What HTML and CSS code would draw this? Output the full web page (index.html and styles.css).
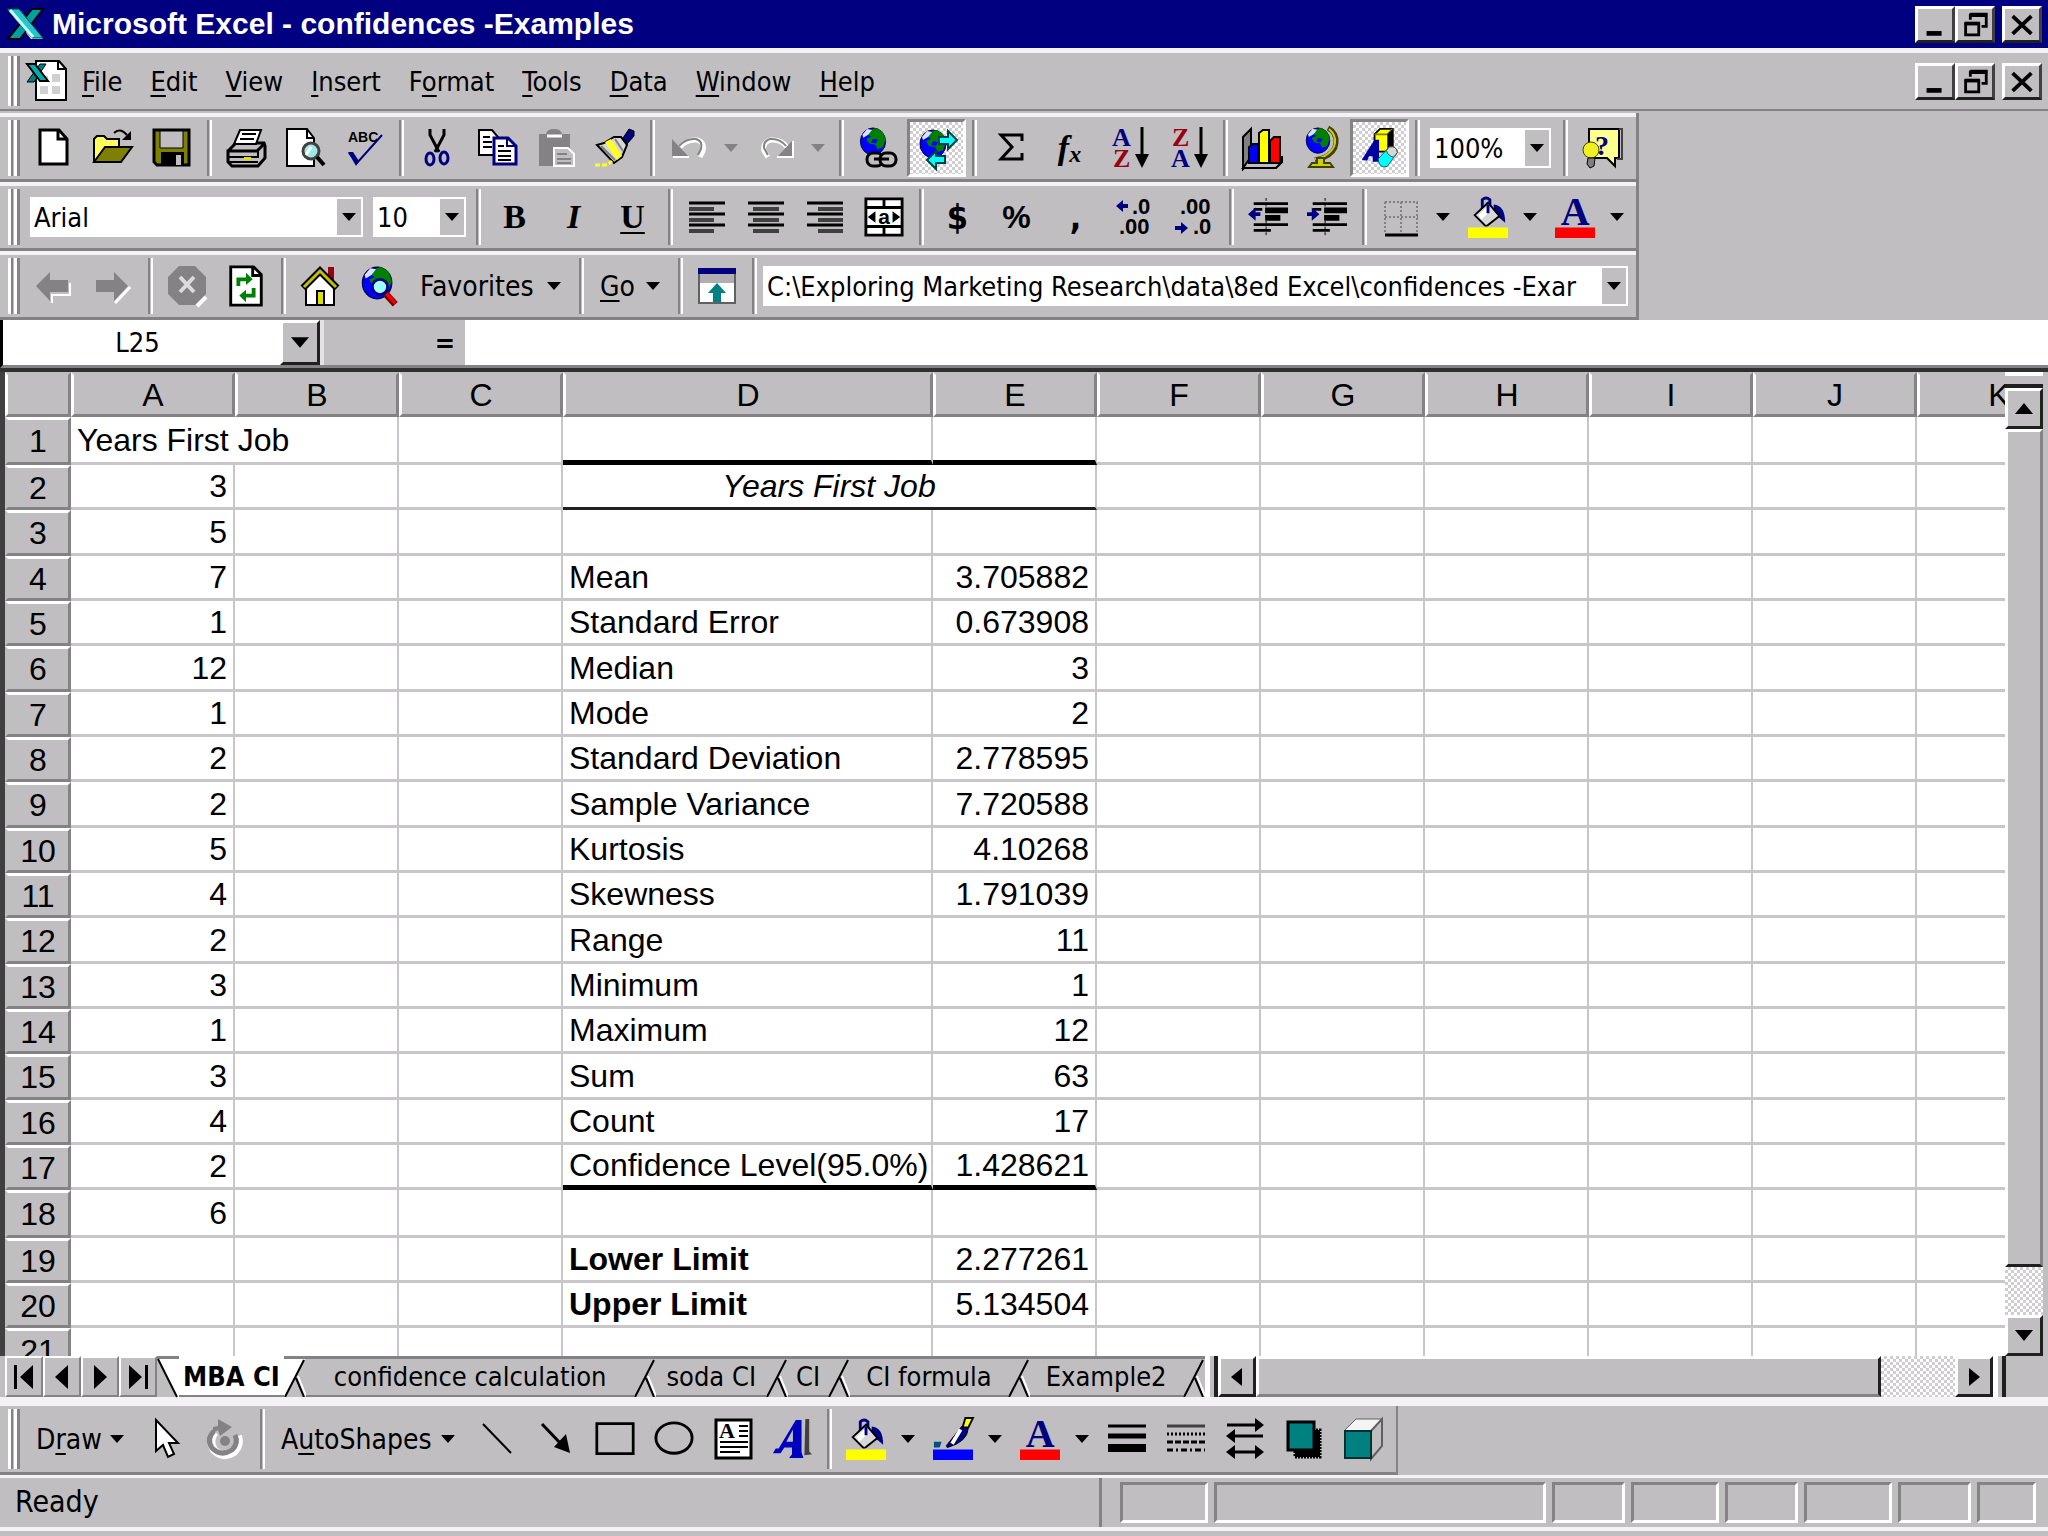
FILE: index.html
```html
<!DOCTYPE html>
<html lang="en">
<head>
  <meta charset="utf-8">
  <title>Microsoft Excel - confidences -Examples</title>
  <link rel="stylesheet" href="styles.css">
</head>
<body>

  <!-- shared icons -->
  <svg class="defs" aria-hidden="true">
    <symbol id="down" viewBox="0 0 14 8"><path d="M0 0h14L7 8z"/></symbol>
    <symbol id="min" viewBox="0 0 32 28"><path d="M7 21h16v5H7z"/></symbol>
    <symbol id="restore" viewBox="0 0 32 28">
      <path d="M11 3h17v13h-5M11 9V3" fill="none" stroke="#000" stroke-width="3"/><path d="M10 2h19v4H10z"/>
      <path d="M6 13h14v12H6z" fill="#c0bec0" stroke="#000" stroke-width="3"/><path d="M5 11h16v4H5z"/>
    </symbol>
    <symbol id="close" viewBox="0 0 32 28"><path d="M6 5l20 19M26 5L6 24" stroke="#000" stroke-width="4"/></symbol>
    <symbol id="globe" viewBox="0 0 28 32">
      <ellipse cx="14" cy="15" rx="13" ry="14" fill="#0000ff" stroke="#003" stroke-width="1"/>
      <path d="M9 4l8-3 7 4 3 8-3 8-5 2-3-5-6-1-3-5 5-2-4-3z" fill="#008000"/>
      <path d="M3 8l5-6 5 1-4 5-5 3z" fill="#d8e4ff"/>
      <path d="M14 12l5 1-2 4-5-1z" fill="#0000ff"/>
    </symbol>
    <symbol id="bucket" viewBox="0 0 40 30">
      <path d="M14 13V3q4-4 8 0v9" fill="none" stroke="#000080" stroke-width="3"/>
      <path d="M26 8q12 1 12 19l-7-6-5-9z" fill="#000080"/>
      <path d="M6 19L20 6l12 14-14 11z" fill="#d8d8d8" stroke="#000" stroke-width="2"/>
      <path d="M10 19l8-8 3 5-8 8z" fill="#fff"/>
      <path d="M20 8v9" stroke="#000080" stroke-width="3"/>
    </symbol>
    <symbol id="indent" viewBox="0 0 40 40">
      <path d="M5 6h36M5 28h36" stroke="#000" stroke-width="3"/>
      <path d="M17 10h24v6H17zM17 18h16v6H17z"/>
      <path d="M5 34h18M5 12h9" stroke="#000" stroke-width="3"/>
      <path d="M18 0v40" stroke="#000" stroke-width="1" stroke-dasharray="3 3"/>
    </symbol>
    <symbol id="slash" viewBox="0 0 22 38">
      <path d="M1 38L20 1M12 19l8 19" fill="none" stroke="#000" stroke-width="2"/>
      <path d="M14 17l8 20" stroke="#fff" stroke-width="2"/>
    </symbol>
  </svg>

  <header class="title-bar">
    <svg class="logo" viewBox="0 0 38 34">
      <path d="M3 4h12l22 28H25z" fill="#fff"/>
      <path d="M26 2h11L14 32H2z" fill="#00a0a0" stroke="#000" stroke-width="2"/>
      <path d="M1 2h12l24 29h-11z" fill="#20c8c8" stroke="#004040" stroke-width="1"/>
      <path d="M4 3l23 27" stroke="#c8ffff" stroke-width="3"/>
    </svg>
    <h1>Microsoft Excel - confidences -Examples</h1>
    <div class="window-buttons">
      <button aria-label="Minimize"><svg><use href="#min"/></svg></button>
      <button aria-label="Restore"><svg><use href="#restore"/></svg></button>
      <button aria-label="Close"><svg><use href="#close"/></svg></button>
    </div>
  </header>

  <nav class="menu-bar">
    <span class="grip"></span>
    <svg class="doc-icon" viewBox="0 0 42 42">
      <path d="M10 1h23l7 8v31H10z" fill="#fff" stroke="#000" stroke-width="2"/>
      <path d="M32 1v8h8" fill="none" stroke="#000" stroke-width="2"/>
      <path d="M14 16h8v6h-8zM26 14h8v8h-8zM14 26h8v8h-8zM26 26h8v8h-8z" fill="#d0d0d0"/>
      <path d="M14 4h6L8 22H1z" fill="#008080" stroke="#000"/>
      <path d="M1 4h8l13 17h-8z" fill="#00b0b0" stroke="#000" stroke-width="2"/>
    </svg>
    <button><u>F</u>ile</button>
    <button><u>E</u>dit</button>
    <button><u>V</u>iew</button>
    <button><u>I</u>nsert</button>
    <button>F<u>o</u>rmat</button>
    <button><u>T</u>ools</button>
    <button><u>D</u>ata</button>
    <button><u>W</u>indow</button>
    <button><u>H</u>elp</button>
    <div class="window-buttons">
      <button aria-label="Minimize workbook"><svg><use href="#min"/></svg></button>
      <button aria-label="Restore workbook"><svg><use href="#restore"/></svg></button>
      <button aria-label="Close workbook"><svg><use href="#close"/></svg></button>
    </div>
  </nav>

  <div class="toolbars">
    <!-- standard -->
    <div class="toolbar">
      <span class="grip"></span>
      <button class="tool" aria-label="New"><svg viewBox="0 0 40 40"><path d="M6 2h19l8 9v25H6z" fill="#fff" stroke="#000" stroke-width="3"/><path d="M24 2v9h9" fill="none" stroke="#000" stroke-width="3"/></svg></button>
      <button class="tool" aria-label="Open"><svg viewBox="0 0 40 40">
        <path d="M1 34V11l3-3h7l3 3h12v8" fill="#ffff60" stroke="#000" stroke-width="2"/>
        <path d="M1 34l11-15h27L28 34z" fill="#808000" stroke="#000" stroke-width="2"/>
        <path d="M21 5q6-6 13 2" fill="none" stroke="#000" stroke-width="2"/><path d="M38 3v9h-9z"/></svg></button>
      <button class="tool" aria-label="Save"><svg viewBox="0 0 40 40">
        <path d="M2 2h35v35H5l-3-3z" fill="#808000" stroke="#000" stroke-width="3"/>
        <path d="M8 3h23v17H8z" fill="#c0bec0" stroke="#000" stroke-width="1"/><path d="M9 24h23v13H9z"/><path d="M24 27h5v10h-5z" fill="#c0bec0"/></svg></button>
      <span class="sep"></span>
      <button class="tool" aria-label="Print"><svg viewBox="0 0 40 40">
        <path d="M14 2h21l-5 14H8z" fill="#fff" stroke="#000" stroke-width="2"/><path d="M16 6h14M14 11h14" stroke="#000" stroke-width="2"/>
        <path d="M2 23l8-8M30 15h8l1 3v12l-7 8H6l-4-4V23h29l7-7" fill="#c0bec0" stroke="#000" stroke-width="3"/>
        <path d="M3 29h29v-6M3 34h29" fill="none" stroke="#000" stroke-width="2"/><path d="M18 29h7v3h-7z" fill="#e0e000"/></svg></button>
      <button class="tool" aria-label="Print Preview"><svg viewBox="0 0 40 40">
        <path d="M2 1h20l7 9v28H2z" fill="#fff" stroke="#000" stroke-width="2"/><path d="M22 1v9h7" fill="none" stroke="#000" stroke-width="2"/>
        <circle cx="26" cy="23" r="8" fill="#a0e8e8" stroke="#404040" stroke-width="3"/><path d="M21 27l5-8" stroke="#fff" stroke-width="3"/><path d="M32 29l7 8" stroke="#000" stroke-width="4"/></svg></button>
      <button class="tool" aria-label="Spelling"><svg viewBox="0 0 40 40">
        <text x="4" y="14" class="svg-abc">ABC</text><path d="M5 25l8 10L38 7" fill="none" stroke="#000080" stroke-width="2"/><path d="M4 24h5l6 9-3 5z" fill="#000080"/></svg></button>
      <span class="sep"></span>
      <button class="tool" aria-label="Cut"><svg viewBox="0 0 40 40">
        <path d="M12 1v6l9 17M26 1v6l-9 17" fill="none" stroke="#000" stroke-width="3"/>
        <ellipse cx="12" cy="31" rx="4" ry="6" fill="none" stroke="#000080" stroke-width="3"/><ellipse cx="26" cy="30" rx="4" ry="6" fill="none" stroke="#000080" stroke-width="3"/></svg></button>
      <button class="tool" aria-label="Copy"><svg viewBox="0 0 40 40">
        <path d="M2 2h13l6 7v18H2z" fill="#fff" stroke="#000" stroke-width="2"/><path d="M6 9h7M6 14h9M6 19h9" stroke="#000" stroke-width="2"/>
        <path d="M17 10h14l8 8v18H17z" fill="#fff" stroke="#000080" stroke-width="3"/><path d="M30 10v8h8" fill="none" stroke="#000080" stroke-width="2"/><path d="M21 18h6M21 23h13M21 28h13M21 32h13" stroke="#000" stroke-width="2"/></svg></button>
      <button class="tool" aria-label="Paste"><svg viewBox="0 0 40 40">
        <path d="M3 6h7q1-5 8-5t8 5h8v32H3z" fill="#848284"/><path d="M11 8h15" stroke="#fff" stroke-width="3"/>
        <path d="M18 20h14l6 6v12H18z" fill="#c0bec0" stroke="#fff" stroke-width="2"/><path d="M21 26h10M21 31h14M21 35h14" stroke="#848284" stroke-width="2"/></svg></button>
      <button class="tool" aria-label="Format Painter"><svg viewBox="0 0 40 40">
        <path d="M28 10l6-9 5 2v5l-7 8z" fill="#000080" stroke="#000"/>
        <path d="M2 17l7-2 10-6h7l6 8-5 12-8 6z" fill="#d8d8d8" stroke="#000" stroke-width="2"/>
        <path d="M16 11l11 17-5 4-12-18z" fill="#ffff20"/><path d="M6 18l14 14M20 11l8 12" stroke="#808080" stroke-width="2"/>
        <path d="M0 37h9q4 0 8-4" fill="none" stroke="#ffff20" stroke-width="3" stroke-dasharray="5 2"/></svg></button>
      <span class="sep"></span>
      <button class="tool" aria-label="Undo" disabled><svg viewBox="0 0 40 40">
        <path d="M11 19q7-8 17-7 8 2 6 11l-3 6" fill="none" stroke="#fff" stroke-width="5"/>
        <path d="M10 18q7-8 17-7 7 2 5 10l-3 6" fill="none" stroke="#848284" stroke-width="2"/><path d="M3 11v17h16z" fill="#848284"/><path d="M4 29h16" stroke="#fff" stroke-width="2"/></svg></button>
      <button class="drop dim" aria-label="Undo list" disabled><svg><use href="#down"/></svg></button>
      <button class="tool" aria-label="Redo" disabled><svg viewBox="0 0 40 40">
        <path d="M31 19q-6-8-16-7-9 2-7 11l4 6" fill="none" stroke="#fff" stroke-width="5"/>
        <path d="M30 18q-6-8-16-7-7 2-6 9l4 7" fill="none" stroke="#848284" stroke-width="2"/><path d="M36 13v15H22z" fill="#848284"/><path d="M21 29h16V13" fill="none" stroke="#fff" stroke-width="2"/></svg></button>
      <button class="drop dim" aria-label="Redo list" disabled><svg><use href="#down"/></svg></button>
      <span class="sep"></span>
      <button class="tool" aria-label="Insert Hyperlink"><svg viewBox="0 0 40 42">
        <use href="#globe" x="1" y="0" width="28" height="31"/>
        <rect x="9" y="26" width="16" height="13" rx="6" fill="#c0bec0" stroke="#000" stroke-width="3"/><rect x="22" y="26" width="16" height="13" rx="6" fill="#c0bec0" stroke="#000" stroke-width="3"/><path d="M16 32h15" stroke="#000" stroke-width="3"/></svg></button>
      <button class="tool pressed" aria-label="Web Toolbar"><svg viewBox="0 0 40 42">
        <use href="#globe" x="1" y="2" width="30" height="32"/>
        <path d="M22 10h9V4l9 9-9 9v-5h-9z" fill="#00ffff" stroke="#004040" stroke-width="2"/><path d="M28 29h-9v-5l-9 9 9 9v-6h9z" fill="#00ffff" stroke="#004040" stroke-width="2"/></svg></button>
      <span class="sep"></span>
      <button class="tool" aria-label="AutoSum"><svg viewBox="0 0 40 40"><path d="M31 13V7H10l11 12L10 31h21v-6" fill="none" stroke="#000" stroke-width="3"/></svg></button>
      <button class="tool fx" aria-label="Paste Function"><i>f</i><i><sub>x</sub></i></button>
      <button class="tool" aria-label="Sort Ascending"><svg viewBox="0 0 40 42">
        <text x="3" y="19" class="svg-az" fill="#000080">A</text><text x="4" y="40" class="svg-az" fill="#990010">Z</text><path d="M33 0v32" stroke="#000" stroke-width="3"/><path d="M26 27h14l-7 14z"/></svg></button>
      <button class="tool" aria-label="Sort Descending"><svg viewBox="0 0 40 42">
        <text x="4" y="19" class="svg-az" fill="#990010">Z</text><text x="3" y="40" class="svg-az" fill="#000080">A</text><path d="M33 0v32" stroke="#000" stroke-width="3"/><path d="M26 27h14l-7 14z"/></svg></button>
      <span class="sep"></span>
      <button class="tool" aria-label="Chart Wizard"><svg viewBox="0 0 40 42">
        <path d="M1 10l8-8v32l-8 8z" fill="#808080" stroke="#000" stroke-width="2"/><path d="M1 41h33l6-6v-5H9z" fill="#c0bec0" stroke="#000" stroke-width="2"/>
        <path d="M7 20l4-3h5v19H7z" fill="#0000ff" stroke="#000" stroke-width="2"/><path d="M17 6l4-3h6v33H17z" fill="#ffff00" stroke="#000" stroke-width="2"/><path d="M28 14l4-4h6v26H28z" fill="#ff0000" stroke="#000" stroke-width="2"/></svg></button>
      <button class="tool" aria-label="Map"><svg viewBox="0 0 40 42">
        <path d="M27 1q9 5 8 15t-13 15l-8 2" fill="none" stroke="#404000" stroke-width="5"/><path d="M28 2q7 6 6 14t-12 14l-8 2" fill="none" stroke="#d0d000" stroke-width="2"/>
        <use href="#globe" x="3" y="0" width="28" height="29"/><path d="M16 31h7v5h6l3 4H8l3-4h5z" fill="#d0d000" stroke="#404000" stroke-width="2"/></svg></button>
      <button class="tool pressed" aria-label="Drawing"><svg viewBox="0 0 40 46">
        <path d="M14 8l6-6h14v20l-6 5H14z" fill="#ffff00" stroke="#000" stroke-width="2"/><path d="M14 8h14l6-6" fill="none" stroke="#808000" stroke-width="2"/><path d="M28 8l6-6v20l-6 5z"/>
        <path d="M0 36l14-22h5v24h-7v-6H8l-2 5z" fill="#0000a0"/><path d="M18 35l12-13q8-2 9 6L28 43q-9 3-10-8z" fill="#00ffff" stroke="#006060"/><path d="M30 22q8-2 9 6l-4 5q-6-1-8-7z" fill="#d8d8d8" stroke="#404040"/></svg></button>
      <span class="sep"></span>
      <div class="combo zoom-combo">
        <select aria-label="Zoom"><option>100%</option></select>
        <svg><use href="#down"/></svg>
      </div>
      <span class="sep"></span>
      <button class="tool" aria-label="Office Assistant"><svg viewBox="0 0 40 42">
        <path d="M7 2h30v29h-4v8l-8-8H7z" fill="#ffff90" stroke="#000" stroke-width="2"/><path d="M37 2h3v30h-5" fill="none" stroke="#404040" stroke-width="2"/>
        <text x="13" y="28" class="svg-q">?</text><circle cx="9" cy="23" r="8" fill="#f0f020" stroke="#404000"/><path d="M6 31h7l-1 8-4 2-3-4z" fill="#808080" stroke="#000"/></svg></button>
    </div>

    <!-- formatting -->
    <div class="toolbar">
      <span class="grip"></span>
      <div class="combo font-combo">
        <select aria-label="Font"><option>Arial</option></select>
        <svg><use href="#down"/></svg>
      </div>
      <div class="combo size-combo">
        <select aria-label="Font Size"><option>10</option></select>
        <svg><use href="#down"/></svg>
      </div>
      <span class="sep"></span>
      <button class="tool glyph"><b>B</b></button>
      <button class="tool glyph"><i>I</i></button>
      <button class="tool glyph"><u>U</u></button>
      <span class="sep"></span>
      <button class="tool" aria-label="Align Left"><svg viewBox="0 0 40 40"><path d="M2 6h36M2 17h36M2 28h36" stroke="#000" stroke-width="3"/><path d="M2 12h25M2 23h25M2 34h25" stroke="#404040" stroke-width="4"/></svg></button>
      <button class="tool" aria-label="Center"><svg viewBox="0 0 40 40"><path d="M2 6h36M2 17h36M2 28h36" stroke="#000" stroke-width="3"/><path d="M7 12h26M7 23h26M7 34h26" stroke="#404040" stroke-width="4"/></svg></button>
      <button class="tool" aria-label="Align Right"><svg viewBox="0 0 40 40"><path d="M2 6h36M2 17h36M2 28h36" stroke="#000" stroke-width="3"/><path d="M13 12h25M13 23h25M13 34h25" stroke="#404040" stroke-width="4"/></svg></button>
      <button class="tool" aria-label="Merge and Center"><svg viewBox="0 0 42 42">
        <path d="M2 2h38v38H2z" fill="#fff" stroke="#000" stroke-width="3"/><path d="M2 11h38M2 31h38M21 2v9M21 31v9" stroke="#000" stroke-width="3"/>
        <path d="M12 15l-8 6 8 6zM30 15l8 6-8 6z"/><text x="15" y="28" class="svg-a">a</text></svg></button>
      <span class="sep"></span>
      <button class="tool glyph dollar">$</button>
      <button class="tool glyph percent">%</button>
      <button class="tool glyph comma">,</button>
      <button class="tool" aria-label="Increase Decimal"><svg viewBox="0 0 40 40"><path d="M1 9l7-6v4h5v4H8v4z" fill="#000080"/><text x="17" y="17" class="svg-dec">.0</text><text x="4" y="37" class="svg-dec">.00</text></svg></button>
      <button class="tool" aria-label="Decrease Decimal"><svg viewBox="0 0 40 40"><text x="6" y="17" class="svg-dec">.00</text><path d="M14 31l-7-6v4H1v4h6v4z" fill="#000080"/><text x="19" y="37" class="svg-dec">.0</text></svg></button>
      <span class="sep"></span>
      <button class="tool" aria-label="Decrease Indent"><svg viewBox="0 0 42 40"><use href="#indent" width="42" height="40"/><path d="M0 17l8-7v5h5v4H8v5z" fill="#000080"/></svg></button>
      <button class="tool" aria-label="Increase Indent"><svg viewBox="0 0 42 40"><use href="#indent" width="42" height="40"/><path d="M13 17l-8-7v5H0v4h5v5z" fill="#000080"/></svg></button>
      <span class="sep"></span>
      <button class="tool" aria-label="Borders"><svg viewBox="0 0 40 40"><path d="M4 5h33M4 20h33M4 5v31M20 5v31M36 5v31" stroke="#808080" stroke-width="2" stroke-dasharray="2 2"/><path d="M4 38h33" stroke="#000" stroke-width="3"/></svg></button>
      <button class="drop" aria-label="Border styles"><svg><use href="#down"/></svg></button>
      <button class="tool" aria-label="Fill Color"><svg viewBox="0 0 42 44"><use href="#bucket" x="1" y="0" width="40" height="32"/><path d="M0 33h42v11H0z" fill="#ffff00"/></svg></button>
      <button class="drop" aria-label="Fill colors"><svg><use href="#down"/></svg></button>
      <button class="tool" aria-label="Font Color"><svg viewBox="0 0 42 44"><text x="6" y="30" class="svg-font">A</text><path d="M0 33h42v11H0z" fill="#ff0000"/></svg></button>
      <button class="drop" aria-label="Font colors"><svg><use href="#down"/></svg></button>
    </div>

    <!-- web -->
    <div class="toolbar">
      <span class="grip"></span>
      <button class="tool" aria-label="Back" disabled><svg viewBox="0 0 40 40"><path d="M18 37v-8h18V17" fill="none" stroke="#fff" stroke-width="2"/><path d="M2 20L16 6v8h18v12H16v9z" fill="#848284"/></svg></button>
      <button class="tool" aria-label="Forward" disabled><svg viewBox="0 0 40 40"><path d="M22 37l15-16" stroke="#fff" stroke-width="3"/><path d="M35 20L21 6v8H3v12h18v9z" fill="#848284"/></svg></button>
      <span class="sep"></span>
      <button class="tool" aria-label="Stop" disabled><svg viewBox="0 0 40 42"><path d="M30 41l9-9" stroke="#fff" stroke-width="4"/><path d="M12 1h16l11 11v17L28 40H12L1 29V12z" fill="#848284"/><path d="M13 12l14 15M27 12L13 27" stroke="#dcdadc" stroke-width="4"/></svg></button>
      <button class="tool" aria-label="Refresh"><svg viewBox="0 0 40 44">
        <path d="M4 2h24l8 8v32H4z" fill="#fff" stroke="#000" stroke-width="3"/><path d="M27 2v9h9" fill="none" stroke="#000" stroke-width="3"/>
        <path d="M12 22v-7h9M28 24v8h-9" fill="none" stroke="#008000" stroke-width="4"/><path d="M20 8l7 7-7 6zM20 26l-7 6 7 7z" fill="#008000"/></svg></button>
      <span class="sep"></span>
      <button class="tool" aria-label="Start Page"><svg viewBox="0 0 40 42">
        <path d="M28 2h6v15l-6-6z" fill="#990010"/><path d="M6 20L20 6l14 14v20H6z" fill="#fff" stroke="#000" stroke-width="2"/>
        <path d="M3 23L20 6l17 17" fill="none" stroke="#000" stroke-width="7"/><path d="M4 22L20 6l16 16" fill="none" stroke="#c0c000" stroke-width="3"/><path d="M17 26h7v14h-7z" fill="#e0e000" stroke="#000" stroke-width="2"/></svg></button>
      <button class="tool" aria-label="Search the Web"><svg viewBox="0 0 40 44">
        <use href="#globe" x="0" y="1" width="36" height="38"/><circle cx="21" cy="23" r="8" fill="#a0ffff" stroke="#000080" stroke-width="3"/><path d="M27 30l10 11" stroke="#600" stroke-width="7"/><path d="M28 30l9 10" stroke="#f00000" stroke-width="4"/></svg></button>
      <button class="text-tool favorites">Favorites <svg><use href="#down"/></svg></button>
      <span class="sep"></span>
      <button class="text-tool go"><span><u>G</u>o</span> <svg><use href="#down"/></svg></button>
      <span class="sep"></span>
      <button class="tool" aria-label="Show Only Web Toolbar"><svg viewBox="0 0 40 40">
        <path d="M2 3h36v34H2z" fill="#fff" stroke="#606060" stroke-width="2"/><path d="M1 2h38v6H1z" fill="#000080"/><path d="M3 8h34v9H3z" fill="#b0aeb0"/><path d="M20 17l9 10h-5v9h-8v-9h-5z" fill="#008080"/></svg></button>
      <span class="sep"></span>
      <div class="combo address-combo">
        <select aria-label="Address"><option>C:\Exploring Marketing Research\data\8ed Excel\confidences -Exar</option></select>
        <svg><use href="#down"/></svg>
      </div>
    </div>
  </div>

  <div class="formula-bar">
    <input class="name-box" type="text" value="L25" aria-label="Name Box">
    <button class="name-drop" aria-label="Names"><svg><use href="#down"/></svg></button>
    <button class="equals">=</button>
    <input class="formula" type="text" aria-label="Formula">
  </div>

  <main class="workbook">
    <div class="sheet">
      <table>
        <colgroup>
          <col class="c-head"><col><col><col><col class="c-wide"><col><col><col><col><col><col><col>
        </colgroup>
        <thead>
          <tr><th></th><th>A</th><th>B</th><th>C</th><th>D</th><th>E</th><th>F</th><th>G</th><th>H</th><th>I</th><th>J</th><th>K</th></tr>
        </thead>
        <tbody>
          <tr class="tall"><th>1</th><td colspan="2">Years First Job</td><td></td><td class="thick"></td><td class="thick"></td><td></td><td></td><td></td><td></td><td></td><td></td></tr>
          <tr><th>2</th><td class="num">3</td><td></td><td></td><td class="caption" colspan="2">Years First Job</td><td></td><td></td><td></td><td></td><td></td><td></td></tr>
          <tr><th>3</th><td class="num">5</td><td></td><td></td><td></td><td></td><td></td><td></td><td></td><td></td><td></td><td></td></tr>
          <tr><th>4</th><td class="num">7</td><td></td><td></td><td>Mean</td><td class="num">3.705882</td><td></td><td></td><td></td><td></td><td></td><td></td></tr>
          <tr><th>5</th><td class="num">1</td><td></td><td></td><td>Standard Error</td><td class="num">0.673908</td><td></td><td></td><td></td><td></td><td></td><td></td></tr>
          <tr><th>6</th><td class="num">12</td><td></td><td></td><td>Median</td><td class="num">3</td><td></td><td></td><td></td><td></td><td></td><td></td></tr>
          <tr><th>7</th><td class="num">1</td><td></td><td></td><td>Mode</td><td class="num">2</td><td></td><td></td><td></td><td></td><td></td><td></td></tr>
          <tr><th>8</th><td class="num">2</td><td></td><td></td><td>Standard Deviation</td><td class="num">2.778595</td><td></td><td></td><td></td><td></td><td></td><td></td></tr>
          <tr><th>9</th><td class="num">2</td><td></td><td></td><td>Sample Variance</td><td class="num">7.720588</td><td></td><td></td><td></td><td></td><td></td><td></td></tr>
          <tr><th>10</th><td class="num">5</td><td></td><td></td><td>Kurtosis</td><td class="num">4.10268</td><td></td><td></td><td></td><td></td><td></td><td></td></tr>
          <tr><th>11</th><td class="num">4</td><td></td><td></td><td>Skewness</td><td class="num">1.791039</td><td></td><td></td><td></td><td></td><td></td><td></td></tr>
          <tr><th>12</th><td class="num">2</td><td></td><td></td><td>Range</td><td class="num">11</td><td></td><td></td><td></td><td></td><td></td><td></td></tr>
          <tr><th>13</th><td class="num">3</td><td></td><td></td><td>Minimum</td><td class="num">1</td><td></td><td></td><td></td><td></td><td></td><td></td></tr>
          <tr><th>14</th><td class="num">1</td><td></td><td></td><td>Maximum</td><td class="num">12</td><td></td><td></td><td></td><td></td><td></td><td></td></tr>
          <tr><th>15</th><td class="num">3</td><td></td><td></td><td>Sum</td><td class="num">63</td><td></td><td></td><td></td><td></td><td></td><td></td></tr>
          <tr><th>16</th><td class="num">4</td><td></td><td></td><td>Count</td><td class="num">17</td><td></td><td></td><td></td><td></td><td></td><td></td></tr>
          <tr><th>17</th><td class="num">2</td><td></td><td></td><td class="thick">Confidence Level(95.0%)</td><td class="num thick">1.428621</td><td></td><td></td><td></td><td></td><td></td><td></td></tr>
          <tr class="tall"><th>18</th><td class="num">6</td><td></td><td></td><td></td><td></td><td></td><td></td><td></td><td></td><td></td><td></td></tr>
          <tr><th>19</th><td></td><td></td><td></td><td><b>Lower Limit</b></td><td class="num">2.277261</td><td></td><td></td><td></td><td></td><td></td><td></td></tr>
          <tr><th>20</th><td></td><td></td><td></td><td><b>Upper Limit</b></td><td class="num">5.134504</td><td></td><td></td><td></td><td></td><td></td><td></td></tr>
          <tr><th>21</th><td></td><td></td><td></td><td></td><td></td><td></td><td></td><td></td><td></td><td></td><td></td></tr>
        </tbody>
      </table>
    </div>
    <div class="v-scroll">
      <span class="v-split"></span>
      <button aria-label="Scroll up"><svg viewBox="0 0 18 11"><path d="M9 0l9 11H0z"/></svg></button>
      <span class="v-thumb"></span>
      <span class="v-track"></span>
      <button aria-label="Scroll down"><svg viewBox="0 0 18 11"><path d="M0 0h18L9 11z"/></svg></button>
    </div>
  </main>

  <div class="sheet-bar">
    <div class="sheet-nav">
      <button aria-label="First sheet"><svg viewBox="0 0 20 24"><path d="M0 0h3v24H0zM19 0v24L6 12z"/></svg></button>
      <button aria-label="Previous sheet"><svg viewBox="0 0 20 24"><path d="M16 0v24L3 12z"/></svg></button>
      <button aria-label="Next sheet"><svg viewBox="0 0 20 24"><path d="M4 0v24l13-12z"/></svg></button>
      <button aria-label="Last sheet"><svg viewBox="0 0 20 24"><path d="M17 0h3v24h-3zM1 0v24l13-12z"/></svg></button>
    </div>
    <div class="tabs">
      <svg class="edge" viewBox="0 0 22 38"><path d="M1 0h21v38H20z" fill="#fff"/><path d="M1 0l19 38" stroke="#000" stroke-width="2"/></svg>
      <button class="tab active">MBA CI</button>
      <svg class="edge" viewBox="0 0 22 38"><path d="M0 0h21L1 38H0z" fill="#fff"/><use href="#slash" width="22" height="38"/></svg>
      <button class="tab first-tab">confidence calculation</button>
      <svg class="edge"><use href="#slash"/></svg>
      <button class="tab">soda CI</button>
      <svg class="edge"><use href="#slash"/></svg>
      <button class="tab tight">CI</button>
      <svg class="edge"><use href="#slash"/></svg>
      <button class="tab wide">CI formula</button>
      <svg class="edge"><use href="#slash"/></svg>
      <button class="tab wide">Example2</button>
      <svg class="edge"><use href="#slash"/></svg>
    </div>
    <div class="h-scroll">
      <span class="h-split"></span>
      <button aria-label="Scroll left"><svg viewBox="0 0 11 18"><path d="M11 0v18L0 9z"/></svg></button>
      <span class="h-thumb"></span>
      <span class="h-track"></span>
      <button aria-label="Scroll right"><svg viewBox="0 0 11 18"><path d="M0 0v18l11-9z"/></svg></button>
      <span class="h-split"></span>
    </div>
  </div>

  <div class="drawing-dock">
    <div class="toolbar">
      <span class="grip"></span>
      <button class="text-tool draw"><span>D<u>r</u>aw</span> <svg><use href="#down"/></svg></button>
      <button class="tool" aria-label="Select Objects"><svg viewBox="0 0 40 40"><path d="M10 1v31l7-6 5 12 6-3-5-11h9z" fill="#fff" stroke="#000" stroke-width="2"/></svg></button>
      <button class="tool" aria-label="Free Rotate" disabled><svg viewBox="0 0 40 42">
        <path d="M10 14q-7 8-1 18 9 9 20 2 7-7 4-16" fill="none" stroke="#fff" stroke-width="8"/><path d="M9 13q-8 8-2 17 9 9 20 2 7-7 3-15" fill="none" stroke="#848284" stroke-width="5"/>
        <path d="M13 1l14 8-12 9-2-6-5 3V9l5-1z" fill="#848284"/><circle cx="20" cy="23" r="5" fill="#848284"/></svg></button>
      <span class="sep"></span>
      <button class="text-tool autoshapes"><span>A<u>u</u>toShapes</span> <svg><use href="#down"/></svg></button>
      <button class="tool" aria-label="Line"><svg viewBox="0 0 40 40"><path d="M6 5l28 29" stroke="#000" stroke-width="2"/></svg></button>
      <button class="tool" aria-label="Arrow"><svg viewBox="0 0 40 40"><path d="M6 5l20 21" stroke="#000" stroke-width="3"/><path d="M34 34l-16-6 12-13z"/></svg></button>
      <button class="tool" aria-label="Rectangle"><svg viewBox="0 0 44 40"><path d="M2 3h40v33H2z" fill="none" stroke="#000" stroke-width="3"/></svg></button>
      <button class="tool" aria-label="Oval"><svg viewBox="0 0 42 40"><ellipse cx="21" cy="19" rx="19" ry="16" fill="none" stroke="#000" stroke-width="3"/></svg></button>
      <button class="tool" aria-label="Text Box"><svg viewBox="0 0 40 42">
        <path d="M3 2h35v38H3z" fill="#fff" stroke="#000" stroke-width="3"/><text x="6" y="20" class="svg-box">A</text><path d="M26 8h9M26 13h9M26 18h9M7 24h28M7 29h28M7 34h20" stroke="#000" stroke-width="2"/></svg></button>
      <button class="tool" aria-label="WordArt"><svg viewBox="0 0 40 44"><path d="M34 1h4v34l3 3-8 1z" fill="#404040"/><path d="M30 2v34l2 6H17l3-4v-7h-8l-4 6H0l3-5h3L24 2z" fill="#0000c0"/><path d="M21 12v13h-7z" fill="#c0bec0"/></svg></button>
      <span class="sep"></span>
      <button class="tool" aria-label="Fill Color"><svg viewBox="0 0 42 44"><use href="#bucket" x="1" y="0" width="40" height="32"/><path d="M0 33h42v11H0z" fill="#ffff00"/></svg></button>
      <button class="drop" aria-label="Fill colors"><svg><use href="#down"/></svg></button>
      <button class="tool" aria-label="Line Color"><svg viewBox="0 0 42 44">
        <path d="M34 0h8l-5 10h-6z" fill="#ffff00" stroke="#000" stroke-width="2"/><path d="M30 9l7 2q-1 14-22 20l-1-2z" fill="#000080" stroke="#000"/><path d="M29 12l-9 15" stroke="#fff" stroke-width="4"/><path d="M1 25h8l-2 6H1z" fill="#005080"/><path d="M0 33h42v11H0z" fill="#0000ff"/></svg></button>
      <button class="drop" aria-label="Line colors"><svg><use href="#down"/></svg></button>
      <button class="tool" aria-label="Font Color"><svg viewBox="0 0 42 44"><text x="6" y="30" class="svg-font">A</text><path d="M0 33h42v11H0z" fill="#ff0000"/></svg></button>
      <button class="drop" aria-label="Font colors"><svg><use href="#down"/></svg></button>
      <button class="tool" aria-label="Line Style"><svg viewBox="0 0 40 40"><path d="M1 7h38" stroke="#000" stroke-width="3"/><path d="M1 17h38" stroke="#000" stroke-width="5"/><path d="M1 29h38" stroke="#000" stroke-width="8"/></svg></button>
      <button class="tool" aria-label="Dash Style"><svg viewBox="0 0 40 40"><path d="M1 7h38" stroke="#404040" stroke-width="3"/><path d="M1 15h38" stroke="#000" stroke-width="3" stroke-dasharray="2 2"/><path d="M1 23h38" stroke="#000" stroke-width="3" stroke-dasharray="6 2"/><path d="M1 31h38" stroke="#000" stroke-width="3" stroke-dasharray="6 3 2 3"/></svg></button>
      <button class="tool" aria-label="Arrow Style"><svg viewBox="0 0 40 42"><path d="M2 7h30M8 18h30M8 34h24" stroke="#000" stroke-width="3"/><path d="M30 0l9 7-9 7zM10 11l-9 7 9 7zM10 27l-9 7 9 7zM30 27l9 7-9 7z"/></svg></button>
      <button class="tool" aria-label="Shadow"><svg viewBox="0 0 40 40"><path d="M11 11h25v27H11z" stroke="#000" stroke-width="3" stroke-dasharray="2 1"/><path d="M4 3h26v28H4z" fill="#008080" stroke="#000" stroke-width="3"/></svg></button>
      <button class="tool" aria-label="3-D"><svg viewBox="0 0 40 42"><path d="M1 13L13 1h26L28 13z" fill="#f4f4f4" stroke="#606060"/><path d="M28 13L39 1v27L28 41z" fill="#c0bec0" stroke="#606060" stroke-width="2"/><path d="M2 13h26v27H2z" fill="#008080" stroke="#003030" stroke-width="2"/></svg></button>
    </div>
  </div>

  <footer class="status-bar">
    <span class="message">Ready</span>
    <span class="panel"></span>
    <span class="panel panel-main"></span>
    <span class="panel panel-small"></span>
    <span class="panel"></span>
    <span class="panel panel-small"></span>
    <span class="panel"></span>
    <span class="panel panel-small"></span>
    <span class="panel panel-last"></span>
  </footer>

</body>
</html>
```
FILE: styles.css
```css
:root {
  --face: #c0bec0;
  --light: #f4f2f4;
  --shadow: #848284;
  --dark: #202020;
  --grid: #c8c6c8;
}

* {
  box-sizing: border-box;
}

body {
  margin: 0;
  height: 100vh;
  overflow: hidden;
  display: flex;
  flex-direction: column;
  background: var(--face);
  color: #000;
  font-family: "DejaVu Sans Condensed", "Liberation Sans", sans-serif;
  font-size: 27px;
}

button,
input,
select {
  margin: 0;
  padding: 0;
  border: none;
  border-radius: 0;
  background: none;
  color: inherit;
  font: inherit;
}

svg {
  display: block;
  flex: none;
  overflow: visible;
}

u {
  text-decoration-thickness: 2px;
  text-underline-offset: 4px;
}

.defs {
  position: absolute;
  width: 0;
  height: 0;
}

/* title and menu */
.title-bar {
  display: flex;
  align-items: center;
  height: 48px;
  padding: 0 6px;
  background: #000080;
  color: #fff;
}

.title-bar .logo {
  width: 38px;
  height: 34px;
}

.title-bar h1 {
  flex: 1;
  margin: 0 0 0 8px;
  font: bold 30px "Liberation Sans", sans-serif;
}

.window-buttons {
  display: flex;
  margin-left: auto;
}

.window-buttons button {
  width: 40px;
  height: 37px;
  padding: 2px;
  background: var(--face);
  border: 3px solid;
  border-color: #fff #404040 #202020 #fff;
}

.window-buttons button:last-child {
  margin-left: 7px;
}

.window-buttons svg {
  width: 30px;
  height: 27px;
}

.menu-bar {
  display: flex;
  align-items: center;
  height: 63px;
  margin-bottom: 2px;
  padding-right: 6px;
  border-top: 5px solid var(--light);
  border-bottom: 2px solid var(--shadow);
}

.doc-icon {
  width: 42px;
  height: 42px;
  margin-left: 2px;
}

.menu-bar > button {
  padding: 2px 14px 0;
  line-height: 40px;
}

/* toolbars */
.grip {
  flex: none;
  align-self: stretch;
  width: 12px;
  margin: 3px 4px 3px 8px;
  border: solid;
  border-width: 0 3px;
  border-color: #fff var(--shadow) #fff #fff;
  background: linear-gradient(90deg, var(--shadow) 2px, var(--face) 2px, var(--face) 3px, #fff 3px);
}

.toolbars {
  align-self: flex-start;
  border-right: 3px solid var(--shadow);
}

.toolbar {
  display: flex;
  align-items: center;
  height: 69px;
  padding-right: 4px;
  border-top: 4px solid var(--light);
  border-bottom: 3px solid var(--shadow);
}

.toolbar button {
  flex: none;
}

.tool {
  display: flex;
  align-items: center;
  justify-content: center;
  width: 59px;
  height: 58px;
}

.tool svg {
  width: 40px;
  height: 42px;
}

.pressed,
.v-track,
.h-track {
  background: repeating-conic-gradient(#d0ced0 0 25%, #fff 0 50%) 0 0 / 6px 6px;
}

.pressed {
  border: 3px solid;
  border-color: var(--shadow) #fff #fff var(--shadow);
}

.drop {
  width: 28px;
  height: 58px;
  padding-left: 6px;
}

.drop svg,
.combo svg,
.text-tool svg {
  width: 14px;
  height: 8px;
}

.dim {
  color: var(--shadow);
  fill: var(--shadow);
}

.sep {
  flex: none;
  align-self: stretch;
  width: 5px;
  margin: 3px 4px 3px 6px;
  border-left: 2px solid var(--shadow);
  border-right: 2px solid #fff;
}

.glyph,
.fx {
  font: bold 34px "Liberation Serif", serif;
}

.dollar,
.comma {
  font-family: "DejaVu Sans Condensed", sans-serif;
}

.percent {
  font: bold 32px "Liberation Sans", sans-serif;
}

.fx sub {
  font-size: 24px;
  vertical-align: -4px;
}

.svg-abc {
  font: bold 14px "Liberation Sans", sans-serif;
}

.svg-az {
  font: bold 26px "Liberation Serif", serif;
}

.svg-q {
  font: bold 28px "Liberation Serif", serif;
  fill: #000080;
}

.svg-a {
  font: bold 22px "Liberation Sans", sans-serif;
}

.svg-dec {
  font: bold 22px "Liberation Sans", sans-serif;
}

.svg-font {
  font: bold 42px "Liberation Serif", serif;
  fill: #000080;
}

.svg-box {
  font: bold 22px "Liberation Serif", serif;
}

.combo {
  position: relative;
  height: 40px;
  background: #fff;
}

.combo select {
  display: block;
  width: 100%;
  height: 40px;
  padding: 0 30px 0 2px;
  border: 2px solid #fff;
  appearance: none;
  background: linear-gradient(var(--face), var(--face)) right / 24px 100% no-repeat;
}

.combo svg {
  position: absolute;
  right: 7px;
  top: 16px;
  pointer-events: none;
}

.font-combo {
  width: 333px;
  margin-left: 6px;
}

.size-combo {
  width: 93px;
  margin: 0 4px 0 10px;
}

.zoom-combo {
  width: 121px;
  margin: 0 6px;
}

.address-combo {
  flex: 1 1 0;
  min-width: 0;
  margin: 0 4px 0 2px;
}

.text-tool {
  display: flex;
  align-items: center;
  justify-content: space-between;
  height: 58px;
  padding: 0 12px;
  font-size: 28px;
}

.favorites {
  width: 165px;
}

.go {
  width: 84px;
}

.draw {
  width: 112px;
}

.autoshapes {
  width: 198px;
}

/* formula bar */
.formula-bar {
  display: flex;
  height: 48px;
  border-left: 3px solid #000;
  border-bottom: 3px solid var(--shadow);
}

.name-box {
  width: 277px;
  padding-right: 8px;
  background: #fff;
  text-align: center;
}

.name-drop,
.v-scroll button,
.h-scroll button {
  display: flex;
  align-items: center;
  justify-content: center;
  flex: none;
  background: var(--face);
  border: 3px solid;
  border-color: #fff var(--dark) var(--dark) #fff;
}

.name-drop {
  width: 40px;
}

.name-drop svg {
  width: 18px;
  height: 11px;
}

.equals {
  width: 145px;
  padding-right: 10px;
  border-left: 4px solid #e4e2e4;
  font-weight: bold;
  text-align: right;
}

.formula {
  flex: 1;
  background: #fff;
}

/* worksheet */
.workbook {
  flex: 1;
  min-height: 0;
  display: flex;
  padding-right: 5px;
  border-top: 4px solid #303030;
}

.sheet {
  flex: 1;
  min-width: 0;
  overflow: hidden;
  background: #fff;
  border-left: 5px solid #404040;
}

table {
  table-layout: fixed;
  width: 2076px;
  border-spacing: 0;
  font: 32px "Liberation Sans", sans-serif;
}

col {
  width: 164px;
}

.c-head {
  width: 66px;
}

.c-wide {
  width: 370px;
}

tr {
  height: 45px;
}

tbody tr:nth-child(3n) {
  height: 46px;
}

tbody tr.tall {
  height: 48px;
}

th,
td {
  padding: 0 6px;
  line-height: 38px;
  white-space: nowrap;
  border-right: 2px solid var(--grid);
  border-bottom: 3px solid var(--grid);
}

th {
  padding: 0;
  font-weight: normal;
  text-align: center;
  background: var(--face);
  border: 3px solid;
  border-color: var(--face) var(--shadow) var(--shadow) #fff;
}

tbody th {
  border-color: #fff var(--shadow) var(--shadow) var(--face);
}

td.num {
  text-align: right;
}

td.thick {
  border-bottom: 5px solid #000;
}

td.caption {
  text-align: center;
  font-style: italic;
  border-bottom-color: #202020;
}

.v-scroll {
  display: flex;
  flex-direction: column;
  width: 38px;
}

.v-scroll button {
  height: 41px;
}

.v-scroll svg {
  width: 18px;
  height: 11px;
}

.v-split {
  height: 16px;
  border-top: 4px solid #fff;
  border-bottom: 4px solid var(--dark);
}

.v-thumb {
  flex: 1;
  border: 3px solid;
  border-color: #fff var(--shadow) var(--dark) #fff;
}

.v-track {
  height: 48px;
}

/* sheet tabs */
.sheet-bar {
  display: flex;
  height: 50px;
  padding: 0 5px;
  border-bottom: 9px solid var(--light);
}

.sheet-nav {
  display: flex;
}

.sheet-nav button {
  display: flex;
  align-items: center;
  justify-content: center;
  width: 38px;
  border: 2px solid;
  border-color: #fff var(--shadow) var(--shadow) #fff;
}

.sheet-nav svg {
  width: 20px;
  height: 24px;
}

.tabs {
  display: flex;
  align-items: flex-start;
  border-top: 3px solid var(--shadow);
}

.tab {
  height: 38px;
  padding: 0 10px;
  line-height: 36px;
  border-bottom: 2px solid var(--shadow);
}

.tab.active {
  padding: 0 4px;
  margin-top: -3px;
  height: 41px;
  line-height: 42px;
  background: #fff;
  font-weight: bold;
}

.tab.first-tab {
  padding: 0 28px;
}

.tab.tight {
  padding: 0 8px;
}

.tab.wide {
  padding: 0 16px;
}

.edge {
  width: 22px;
  height: 38px;
}

.h-scroll {
  flex: 1;
  display: flex;
  margin-right: 37px;
}

.h-scroll button {
  width: 38px;
}

.h-scroll svg {
  width: 11px;
  height: 18px;
}

.h-split {
  width: 13px;
  border-left: 5px solid #fff;
  border-right: 4px solid var(--dark);
}

.h-thumb {
  flex: 1;
  border: 3px solid;
  border-color: #fff var(--dark) var(--shadow) #fff;
}

.h-track {
  width: 74px;
}

/* drawing toolbar and status bar */
.drawing-dock {
  display: flex;
  border-bottom: 3px solid var(--light);
}

.drawing-dock .toolbar {
  border-top: none;
  border-right: 2px solid var(--shadow);
}

.status-bar {
  display: flex;
  gap: 6px;
  height: 53px;
  margin-bottom: 5px;
  padding: 4px 12px 4px 0;
  border-bottom: 4px solid var(--light);
}

.message {
  flex: 1;
  margin: -4px 12px -4px 0;
  padding-left: 15px;
  line-height: 48px;
  font-size: 30px;
  border-right: 3px solid var(--shadow);
}

.panel {
  width: 88px;
  border: 3px solid;
  border-color: var(--shadow) #fff #fff var(--shadow);
}

.panel-main {
  width: 332px;
}

.panel-small {
  width: 73px;
}

.panel-last {
  width: 59px;
}
```
